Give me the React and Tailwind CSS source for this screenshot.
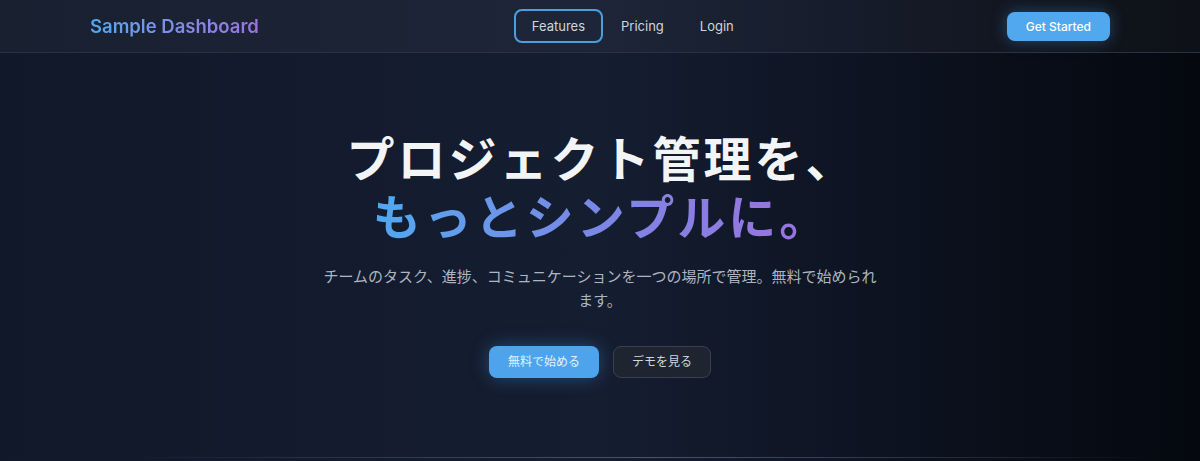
import React from "react";

const font = { fontFamily: "Inter, 'Noto Sans CJK JP', sans-serif" };

const NavLink = ({ label, active }) => (
  <a
    href="#"
    className={`px-4 py-1.5 rounded-lg text-[13px] leading-[18px] text-gray-300 border-2 ${
      active ? "border-[#4a9fe3]" : "border-transparent"
    }`}
  >
    {label}
  </a>
);

const Header = () => (
  <header className="h-[53px] border-b border-[#2a3142] bg-white/[0.035]">
    <div className="max-w-[1020px] mx-auto h-full flex items-center justify-between">
      <a
        href="#"
        className="text-[18.5px] font-semibold leading-7 bg-gradient-to-r from-[#4fa8ef] to-[#9a72df] bg-clip-text text-transparent"
      >
        Sample Dashboard
      </a>
      <nav className="flex items-center">
        <NavLink label="Features" active />
        <NavLink label="Pricing" />
        <NavLink label="Login" />
      </nav>
      <button className="px-[19px] py-1.5 rounded-lg bg-[#52a8ef] text-white text-[12px] leading-[17px] font-medium shadow-[0_0_16px_rgba(82,168,239,0.35)]">
        Get Started
      </button>
    </div>
  </header>
);

const Hero = () => (
  <section className="relative flex-1 flex flex-col items-center pt-[78px]">
    <h1 className="text-[48px] leading-[1.2] font-semibold text-center text-gray-100 tracking-[3px] pl-[3px]">
      プロジェクト管理を、
      <br />
      <span className="inline-block bg-gradient-to-r from-[#4fa8ef] via-[#7a87e6] to-[#9d6fdd] bg-clip-text text-transparent">
        もっとシンプルに。
      </span>
    </h1>
    <p className="mt-[19px] max-w-[560px] text-center text-[15px] leading-6 text-[#aeb5c2]">
      チームのタスク、進捗、コミュニケーションを一つの場所で管理。無料で始められます。
    </p>
    <div className="mt-[33px] flex items-center gap-[14px]">
      <button className="px-[19px] py-2 rounded-lg bg-[#4ea4ec] text-[#e4f1fc] text-xs shadow-[0_0_18px_rgba(78,164,236,0.35)]">
        無料で始める
      </button>
      <button className="px-[18px] py-[7px] rounded-lg bg-[#1f2431] border border-[#3a4050] text-gray-300 text-xs">
        デモを見る
      </button>
    </div>
    <div className="absolute bottom-[3px] left-[120px] right-[40px] h-px bg-gradient-to-r from-transparent via-[#4a5468] to-transparent" />
  </section>
);

export default function App() {
  return (
    <div
      style={font}
      className="w-full h-[461px] overflow-hidden flex flex-col bg-gradient-to-r from-[#111829] via-[#151d31] to-[#05080f]"
    >
      <Header />
      <Hero />
    </div>
  );
}
